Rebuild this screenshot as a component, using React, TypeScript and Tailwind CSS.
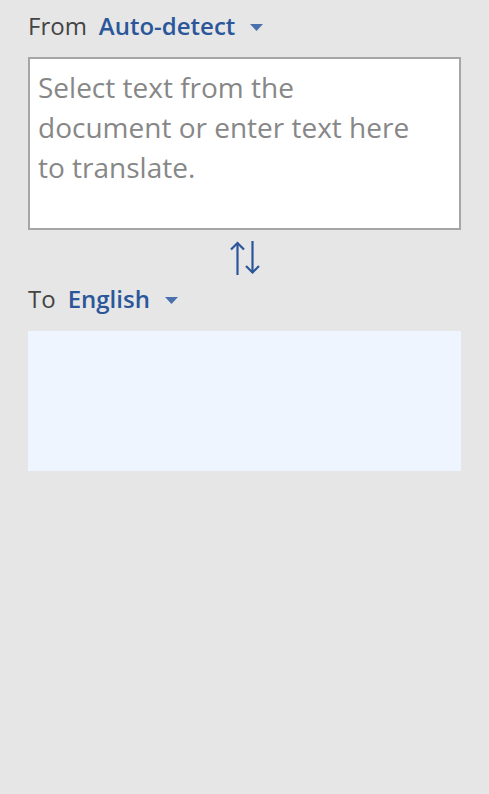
import React from "react";

const Caret = () => (
  <svg width="13" height="7" viewBox="0 0 13 7" className="ml-[15px] mt-[3px]">
    <path d="M0 0 L13 0 L6.5 7 Z" fill="#4a70ad" />
  </svg>
);

const SwapIcon = () => (
  <svg width="30" height="34" viewBox="0 0 30 34" fill="none" stroke="#2b579a" strokeWidth="2.2">
    <path d="M7.5 34 V2" />
    <path d="M1 8.5 L7.5 2 L14 8.5" />
    <path d="M22.5 0 V31.5" />
    <path d="M16 25 L22.5 31.5 L29 25" />
  </svg>
);

export default function App() {
  return (
    <div
      className="min-h-screen w-full bg-[#e6e6e6] px-7"
      style={{ fontFamily: '"Open Sans", "Noto Sans", sans-serif' }}
    >
      <div className="flex items-center pt-[10px] h-[42px]">
        <span className="text-[24px] leading-[32px] text-[#444444]">From</span>
        <span className="ml-3 text-[24px] leading-[32px] font-semibold text-[#2b579a]">Auto-detect</span>
        <Caret />
      </div>
      <div className="mt-[15px] h-[173px] border-2 border-[#a6a6a6] bg-white px-2 pt-[8px]">
        <p className="max-w-[382px] text-[28px] leading-[40px] text-[#878787]">
          Select text from the document or enter text here to translate.
        </p>
      </div>
      <div className="flex justify-center pt-[11px] h-[53px]">
        <SwapIcon />
      </div>
      <div className="flex items-center h-[32px]">
        <span className="text-[24px] leading-[32px] text-[#444444]">To</span>
        <span className="ml-3 text-[24px] leading-[32px] font-semibold text-[#2b579a]">English</span>
        <Caret />
      </div>
      <div className="mt-[16px] h-[140px] bg-[#eef5ff]" />
    </div>
  );
}
